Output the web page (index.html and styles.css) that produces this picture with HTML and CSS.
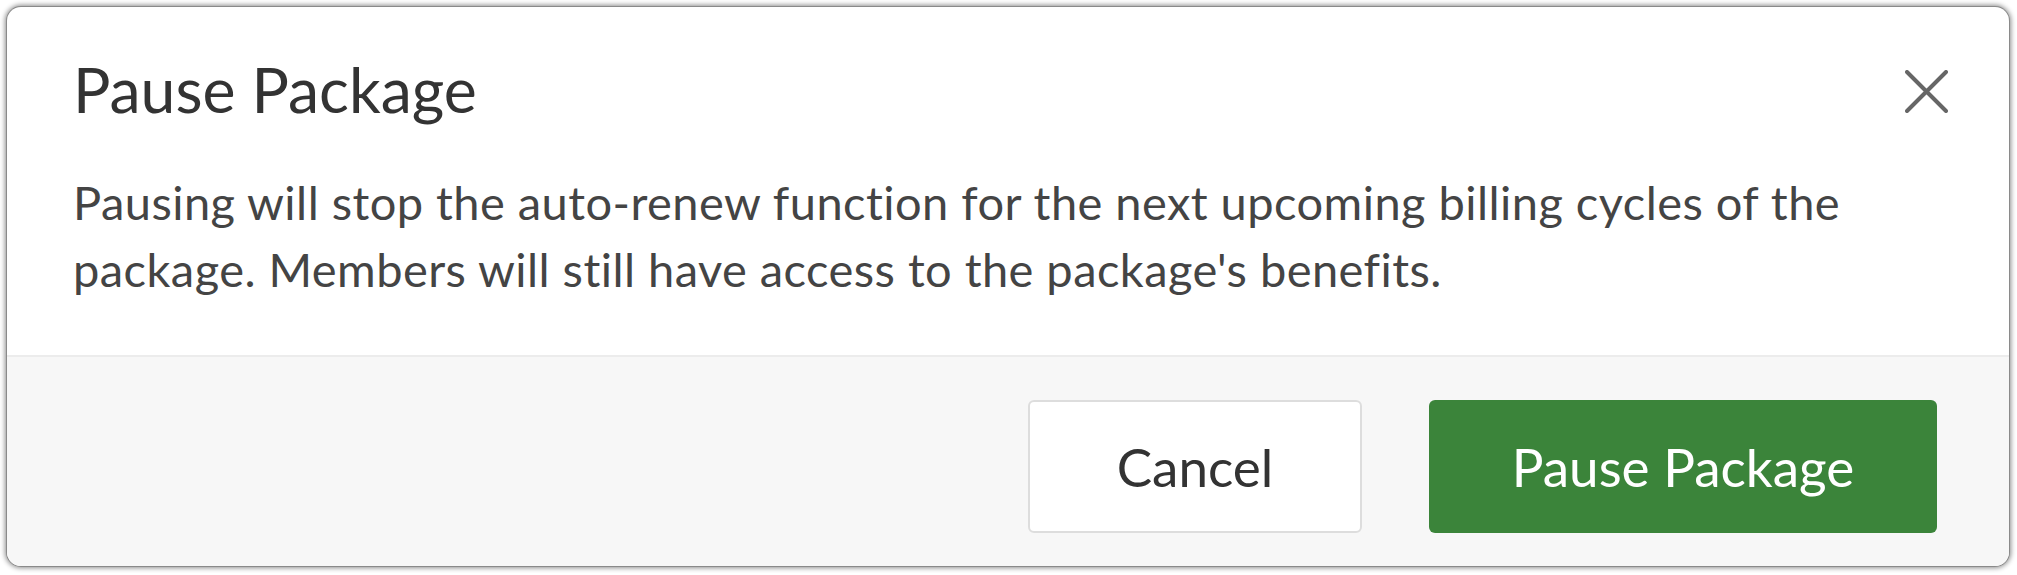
FILE: index.html
```html
<!DOCTYPE html>
<html lang="en">
<head>
<meta charset="utf-8">
<title>Pause Package</title>
<link rel="stylesheet" href="styles.css">
</head>
<body>
<div class="dialog">
  <div class="header">
    <h1 class="title">Pause Package</h1>
    <button class="close" aria-label="Close">
      <svg width="43" height="43" viewBox="0 0 43 43"><path d="M2 2 L41 41 M41 2 L2 41" stroke="#666" stroke-width="4" stroke-linecap="round" fill="none"/></svg>
    </button>
  </div>
  <div class="body">
    <p class="text">Pausing will stop the auto-renew function for the next upcoming billing cycles of the package. Members will still have access to the package's benefits.</p>
  </div>
  <div class="footer">
    <button class="btn btn-cancel">Cancel</button>
    <button class="btn btn-primary">Pause Package</button>
  </div>
</div>
</body>
</html>
```

FILE: styles.css
```css
html, body {
  margin: 0;
  padding: 0;
  background: #ffffff;
}
body {
  padding: 7px;
  font-family: "Lato", "Open Sans", sans-serif;
}
.dialog {
  width: 2002px;
  height: 559px;
  box-sizing: border-box;
  border-radius: 14px;
  overflow: hidden;
  background: #ffffff;
  box-shadow: 0 0 0 1px #8a8a8a, 0 0 5px 2px rgba(0,0,0,0.45);
  display: flex;
  flex-direction: column;
}
.header {
  display: flex;
  justify-content: space-between;
  align-items: flex-start;
  padding: 42px 61px 0 66px;
}
.title {
  margin: 0;
  font-size: 62.5px;
  font-weight: 400;
  line-height: 80px;
  color: #333333;
}
.close {
  border: 0;
  background: none;
  padding: 0;
  margin-top: 21px;
  width: 43px;
  height: 43px;
  cursor: pointer;
}
.close svg { display: block; }
.body {
  padding: 40px 66px 0 66px;
  height: 226px;
  box-sizing: border-box;
}
.text {
  margin: 0;
  max-width: 1840px;
  font-size: 47px;
  letter-spacing: 0.45px;
  line-height: 67px;
  color: #444444;
}
.footer {
  flex: 1;
  background: #f7f7f7;
  border-top: 2px solid #ececec;
  display: flex;
  justify-content: flex-end;
  align-items: flex-start;
  gap: 67px;
  padding: 43px 72px 0 0;
}
.btn {
  height: 133px;
  border-radius: 6px;
  font-family: inherit;
  font-size: 53px;
  cursor: pointer;
}
.btn-cancel {
  width: 334px;
  background: #ffffff;
  border: 2px solid #dddddd;
  color: #333333;
}
.btn-primary {
  width: 508px;
  background: #3b843a;
  border: 0;
  color: #ffffff;
}
```
